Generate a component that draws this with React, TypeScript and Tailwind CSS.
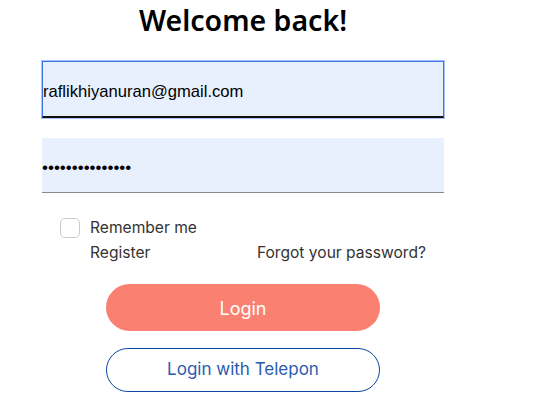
import { useState } from "react";

const App = () => {
  const [remember, setRemember] = useState(false);

  return (
    <div className="h-[419px] w-[537px] bg-white font-['Inter',sans-serif]">
      <div className="ml-[42px] flex w-[402px] flex-col">
        <h1 className="pt-[1px] text-center font-['Noto_Sans',sans-serif] text-[28.5px] font-semibold leading-[38px] text-black">
          Welcome back!
        </h1>
        <input
          className="mt-[22px] h-[57px] w-full border border-b-2 border-[#3b73e8] border-b-[#111] bg-[#e8f0fe] px-0 pt-[5px] font-['Liberation_Sans',sans-serif] text-[16.6px] text-black outline outline-1 outline-[#a8c3fb]"
          type="email"
          defaultValue="raflikhiyanuran@gmail.com"
          autoFocus
        />
        <input
          className="mt-[20px] h-[55px] w-full border-b border-[#8a8a8a] bg-[#e8f0fe] px-0 pt-[5px] font-['Liberation_Sans',sans-serif] text-[17px] text-black outline-none"
          type="password"
          defaultValue="raflikhiyanuran"
        />
        <div className="mt-[25px] flex flex-col gap-[5px] px-[18px] text-[15.6px] text-[#333]">
          <label className="flex items-center gap-[10px]">
            <span
              className={`h-5 w-5 rounded-[5px] border ${remember ? "border-[#fa8072] bg-[#fa8072]" : "border-[#ccc] bg-white"}`}
              onClick={() => setRemember(!remember)}
            />
            <span className="leading-5">Remember me</span>
          </label>
          <div className="flex items-center justify-between pl-[30px] leading-5">
            <a>Register</a>
            <a>Forgot your password?</a>
          </div>
        </div>
        <div className="mt-[21px] flex flex-col items-center gap-[17px]">
          <button
            className="h-[47px] w-[274px] rounded-full bg-[#fa8072] pt-[2px] text-[18px] text-white"
            type="button"
          >
            Login
          </button>
          <button
            className="h-[44px] w-[274px] rounded-full border border-[#0d47a1] text-[17px] text-[#2a5bb0]"
            type="button"
          >
            Login with Telepon
          </button>
        </div>
      </div>
    </div>
  );
};

export default App;
